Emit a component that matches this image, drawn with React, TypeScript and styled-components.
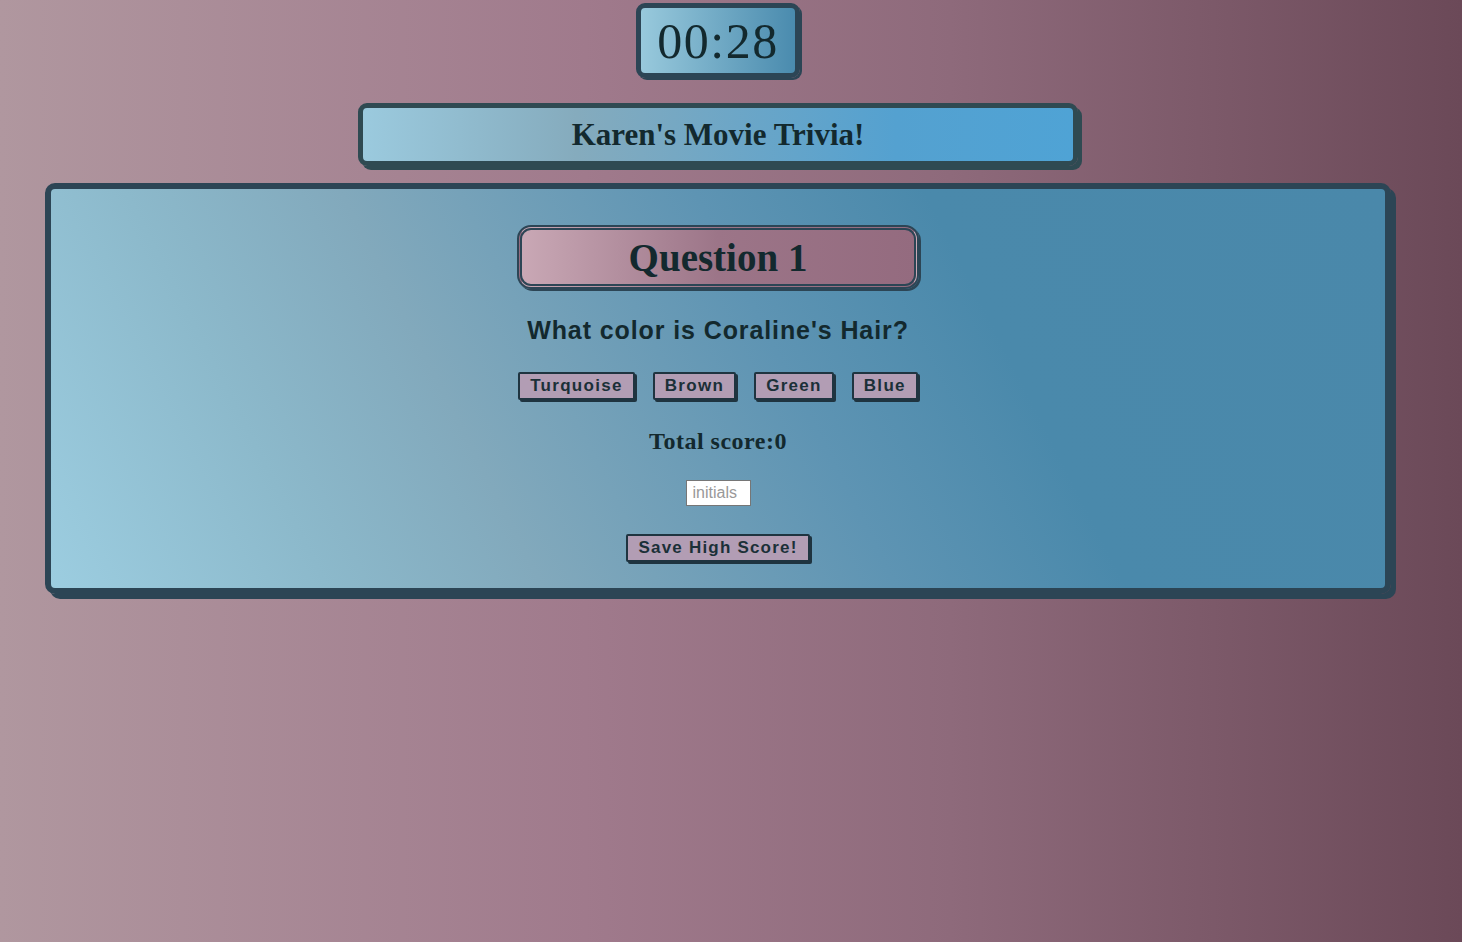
import * as React from "react";
import styled, { createGlobalStyle } from "styled-components";

const GlobalStyle = createGlobalStyle`
  html, body {
    margin: 0;
    padding: 0;
    min-height: 100vh;
  }
  body {
    background: linear-gradient(to right, #b0979f 0%, #a07a8c 40%, #8e6a7b 65%, #6b4958 100%);
    font-family: "Liberation Serif", "Times New Roman", serif;
    color: #14292f;
  }
`;

const Page = styled.div`
  display: flex;
  flex-direction: column;
  align-items: center;
  min-height: 100vh;
  padding: 3px 26px 0 0;
  box-sizing: border-box;
`;

const Timer = styled.div`
  width: 154px;
  height: 65px;
  border: 5px solid #2c4555;
  border-radius: 9px;
  box-shadow: 2px 2px 0 #2c4555;
  background: linear-gradient(to right, #98c9dc, #4a8bae);
  display: flex;
  align-items: center;
  justify-content: center;
  font-size: 50px;
  letter-spacing: 1.5px;
  color: #13292e;
`;

const Header = styled.h1`
  margin: 25px 0 0;
  width: 710px;
  height: 53px;
  border: 5px solid #2f4a52;
  border-radius: 9px;
  box-shadow: 4px 4px 0 #2f4a52;
  background: linear-gradient(to right, #9bcade 0%, #85abbd 30%, #54a1d0 75%, #4fa3d5 100%);
  display: flex;
  align-items: center;
  justify-content: center;
  font-size: 31px;
  font-weight: bold;
  color: #13292e;
`;

const Card = styled.main`
  margin-top: 17px;
  width: 1346px;
  border: 6px solid #2c4555;
  border-radius: 10px;
  box-shadow: 5px 5px 0 #2c4555;
  background: linear-gradient(
    63deg,
    #9ccde0 0%,
    #8cb9cb 18%,
    #82a9bc 32%,
    #5e94b3 55%,
    #4a89ab 70%,
    #4a88aa 100%
  );
  display: flex;
  flex-direction: column;
  align-items: center;
  padding: 36px 0 26px;
  box-sizing: border-box;
`;

const QuestionTitle = styled.h2`
  margin: 0;
  width: 392px;
  height: 54px;
  border: 5px double #2c4555;
  border-radius: 14px;
  box-shadow: 2px 2px 0 #2c4555;
  background: linear-gradient(to right, #c9a8b5 0%, #9c7588 50%, #946b7f 100%);
  display: flex;
  align-items: center;
  justify-content: center;
  font-size: 39px;
  font-weight: bold;
  color: #13292e;
`;

const Prompt = styled.p`
  margin: 27px 0 0;
  font-family: "Liberation Sans", Arial, sans-serif;
  font-weight: bold;
  font-size: 25px;
  letter-spacing: 0.9px;
  color: #13292e;
`;

const Choices = styled.div`
  display: flex;
  gap: 18px;
  margin-top: 27px;
`;

const Button = styled.button`
  height: 28px;
  padding: 0 10px;
  background: #b29db4;
  border: 2px solid #1f3440;
  border-radius: 2px;
  box-shadow: 2px 2px 0 #1f3440;
  font-family: "Liberation Sans", Arial, sans-serif;
  font-weight: bold;
  font-size: 17px;
  letter-spacing: 1.3px;
  color: #1b3038;
  cursor: pointer;
`;

const Score = styled.p`
  margin: 28px 0 0;
  font-size: 24px;
  letter-spacing: 0.5px;
  font-weight: bold;
  color: #13292e;
`;

const Initials = styled.input`
  margin-top: 25px;
  width: 65px;
  height: 26px;
  box-sizing: border-box;
  border: 1px solid #767676;
  padding: 0 6px;
  font-family: "Liberation Sans", Arial, sans-serif;
  font-size: 16px;
  background: #fff;
  &::placeholder {
    color: #999;
  }
`;

const SaveButton = styled(Button)`
  margin-top: 28px;
  padding: 0 10px;
  font-size: 17px;
  letter-spacing: 1.2px;
`;

export default function App() {
  return (
    <>
      <GlobalStyle />
      <Page>
        <Timer>00:28</Timer>
        <Header>Karen's Movie Trivia!</Header>
        <Card>
          <QuestionTitle>Question 1</QuestionTitle>
          <Prompt>What color is Coraline's Hair?</Prompt>
          <Choices>
            <Button>Turquoise</Button>
            <Button>Brown</Button>
            <Button>Green</Button>
            <Button>Blue</Button>
          </Choices>
          <Score>Total score:0</Score>
          <Initials placeholder="initials" />
          <SaveButton>Save High Score!</SaveButton>
        </Card>
      </Page>
    </>
  );
}
